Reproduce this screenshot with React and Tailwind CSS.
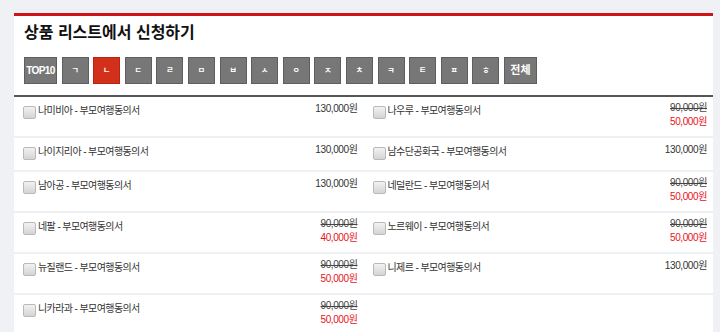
import React from 'react';

const letters = ['ㄱ', 'ㄴ', 'ㄷ', 'ㄹ', 'ㅁ', 'ㅂ', 'ㅅ', 'ㅇ', 'ㅈ', 'ㅊ', 'ㅋ', 'ㅌ', 'ㅍ', 'ㅎ'];

const rows = [
  [
    { name: '나미비아', price: '130,000원' },
    { name: '나우루', old: '90,000원', price: '50,000원' },
  ],
  [
    { name: '나이지리아', price: '130,000원' },
    { name: '남수단공화국', price: '130,000원' },
  ],
  [
    { name: '남아공', price: '130,000원' },
    { name: '네덜란드', old: '90,000원', price: '50,000원' },
  ],
  [
    { name: '네팔', old: '90,000원', price: '40,000원' },
    { name: '노르웨이', old: '90,000원', price: '50,000원' },
  ],
  [
    { name: '뉴질랜드', old: '90,000원', price: '50,000원' },
    { name: '니제르', price: '130,000원' },
  ],
  [{ name: '니카라과', old: '90,000원', price: '50,000원' }, null],
];

const heights = ['h-[41px]', 'h-[34px]', 'h-[41px]', 'h-[41px]', 'h-[41px]', 'h-[41px]'];

const Cell = ({ item }) => {
  if (!item) return <div />;
  return (
    <div className="min-w-0 flex justify-between items-start pl-[9px] pr-[6px] pt-[4px]">
      <div className="flex items-start">
        <span className="mt-[5px] w-[13px] h-[13px] rounded-[2px] border border-[#b9b9b9] bg-gradient-to-b from-[#f2f2f2] to-[#d4d4d4] shrink-0" />
        <span className="mt-[3px] ml-[2px] text-[10px] leading-[14px] text-[#333] tracking-[-0.6px]">
          {item.name} - 부모여행동의서
        </span>
      </div>
      <div className="flex flex-col items-end text-[10px] leading-[14px] tracking-[-0.4px]">
        {item.old ? (
          <>
            <span className="text-[#444] line-through">{item.old}</span>
            <span className="text-[#e8121b]">{item.price}</span>
          </>
        ) : (
          <span className="text-[#333] mt-[1px]">{item.price}</span>
        )}
      </div>
    </div>
  );
};

const App = () => {
  return (
    <div
      className="w-[720px] h-[332px] overflow-hidden bg-[#f0f1f5] pt-[13px] pl-[14px] pr-[7px]"
      style={{ fontFamily: '"Liberation Sans", "Noto Sans CJK KR", sans-serif' }}
    >
      <div className="bg-white border-t-[3px] border-[#cc1518]">
        <h2 className="pl-[10px] pt-[6px] text-[16px] leading-[22px] font-bold text-[#111]">
          상품 리스트에서 신청하기
        </h2>
        <div className="flex gap-[4.6px] pl-[10px] mt-[13px]">
          <button className="w-[33px] h-[27px] bg-[#777] border border-[#5e5e5e] text-white text-[10px] font-bold tracking-[-0.6px]">
            TOP10
          </button>
          {letters.map((l) => (
            <button
              key={l}
              className={
                l === 'ㄴ'
                  ? 'w-[27px] h-[27px] bg-[#d3301b] border border-[#b72512] text-white text-[8px] font-bold'
                  : 'w-[27px] h-[27px] bg-[#777] border border-[#5e5e5e] text-white text-[8px] font-bold'
              }
            >
              {l}
            </button>
          ))}
          <button className="w-[33px] h-[27px] bg-[#777] border border-[#5e5e5e] text-white text-[11px] font-bold">
            전체
          </button>
        </div>
        <div className="mt-[11px] border-t-2 border-[#555]">
          {rows.map((r, i) => (
            <div key={i} className={`grid grid-cols-2 border-b-2 border-[#eef0f3] ${heights[i]}`}>
              <Cell item={r[0]} />
              <Cell item={r[1]} />
            </div>
          ))}
        </div>
      </div>
    </div>
  );
};

export default App;
